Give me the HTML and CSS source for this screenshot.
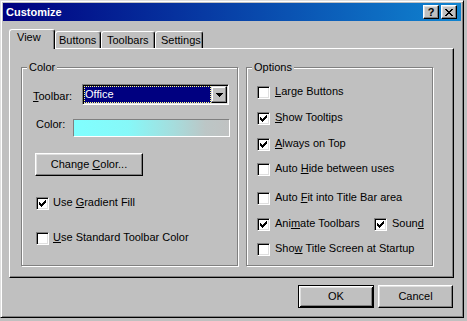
FILE: index.html
```html
<!DOCTYPE html>
<html>
<head>
<meta charset="utf-8">
<title>Customize</title>
<link rel="stylesheet" href="styles.css">
</head>
<body>
<div class="window">
  <div class="titlebar">
    <span class="title">Customize</span>
    <div class="caption-btns">
      <button class="cap-btn cap-help">?</button>
      <button class="cap-btn cap-close"><svg width="8" height="7" viewBox="0 0 8 7" shape-rendering="crispEdges"><path d="M0 0h2v1H0z M6 0h2v1H6z M1 1h2v1H1z M5 1h2v1H5z M2 2h4v1H2z M3 3h2v1H3z M2 4h4v1H2z M1 5h2v1H1z M5 5h2v1H5z M0 6h2v1H0z M6 6h2v1H6z" fill="#000"/></svg></button>
    </div>
  </div>

  <div class="dialog">
    <div class="tabs">
      <div class="tab tab-active tab-view">View</div>
      <div class="tab tab-buttons">Buttons</div>
      <div class="tab tab-toolbars">Toolbars</div>
      <div class="tab tab-settings">Settings</div>
    </div>

    <div class="panel">
      <fieldset class="group group-color">
        <legend>Color</legend>
        <div class="row row-toolbar">
          <span class="lbl lbl-toolbar"><u>T</u>oolbar:</span>
          <div class="combo">
            <div class="combo-value"><span>Office</span></div>
            <div class="combo-btn"><svg width="7" height="4" viewBox="0 0 7 4" shape-rendering="crispEdges"><path d="M0 0h7v1H0z M1 1h5v1H1z M2 2h3v1H2z M3 3h1v1H3z" fill="#000"/></svg></div>
          </div>
        </div>
        <div class="row row-color">
          <span class="lbl lbl-color">Color:</span>
          <div class="swatch"></div>
        </div>
        <button class="btn btn-change">Change <u>C</u>olor...</button>
        <label class="check check-gradient"><span class="box"><svg width="11" height="11" viewBox="0 0 11 11" shape-rendering="crispEdges"><path d="M2 4h1v3H2z M3 5h1v3H3z M4 6h1v3H4z M5 5h1v3H5z M6 4h1v3H6z M7 3h1v3H7z M8 2h1v3H8z" fill="#000"/></svg></span><span class="check-text">Use <u>G</u>radient Fill</span></label>
        <label class="check check-standard"><span class="box"></span><span class="check-text"><u>U</u>se Standard Toolbar Color</span></label>
      </fieldset>

      <fieldset class="group group-options">
        <legend>Options</legend>
        <label class="check opt opt-1"><span class="box"></span><span class="check-text"><u>L</u>arge Buttons</span></label>
        <label class="check opt opt-2"><span class="box"><svg width="11" height="11" viewBox="0 0 11 11" shape-rendering="crispEdges"><path d="M2 4h1v3H2z M3 5h1v3H3z M4 6h1v3H4z M5 5h1v3H5z M6 4h1v3H6z M7 3h1v3H7z M8 2h1v3H8z" fill="#000"/></svg></span><span class="check-text"><u>S</u>how Tooltips</span></label>
        <label class="check opt opt-3"><span class="box"><svg width="11" height="11" viewBox="0 0 11 11" shape-rendering="crispEdges"><path d="M2 4h1v3H2z M3 5h1v3H3z M4 6h1v3H4z M5 5h1v3H5z M6 4h1v3H6z M7 3h1v3H7z M8 2h1v3H8z" fill="#000"/></svg></span><span class="check-text"><u>A</u>lways on Top</span></label>
        <label class="check opt opt-4"><span class="box"></span><span class="check-text">Auto <u>H</u>ide between uses</span></label>
        <label class="check opt opt-5"><span class="box"></span><span class="check-text">Auto <u>F</u>it into Title Bar area</span></label>
        <div class="opt-pair opt-6">
          <label class="check check-animate"><span class="box"><svg width="11" height="11" viewBox="0 0 11 11" shape-rendering="crispEdges"><path d="M2 4h1v3H2z M3 5h1v3H3z M4 6h1v3H4z M5 5h1v3H5z M6 4h1v3H6z M7 3h1v3H7z M8 2h1v3H8z" fill="#000"/></svg></span><span class="check-text">Ani<u>m</u>ate Toolbars</span></label>
          <label class="check"><span class="box"><svg width="11" height="11" viewBox="0 0 11 11" shape-rendering="crispEdges"><path d="M2 4h1v3H2z M3 5h1v3H3z M4 6h1v3H4z M5 5h1v3H5z M6 4h1v3H6z M7 3h1v3H7z M8 2h1v3H8z" fill="#000"/></svg></span><span class="check-text">Soun<u>d</u></span></label>
        </div>
        <label class="check opt opt-7"><span class="box"></span><span class="check-text">Sho<u>w</u> Title Screen at Startup</span></label>
      </fieldset>
    </div>

    <div class="actions">
      <button class="btn btn-default btn-ok">OK</button>
      <button class="btn btn-cancel">Cancel</button>
    </div>
  </div>
</div>
</body>
</html>
```

FILE: styles.css
```css
* { box-sizing: border-box; }
html, body { margin: 0; padding: 0; }
body {
  width: 467px;
  height: 321px;
  overflow: hidden;
  background: #c0c0c0;
  font-family: "Liberation Sans", Arial, sans-serif;
  font-size: 11px;
  line-height: 13px;
  color: #000;
}
u { text-decoration: underline; text-underline-offset: 1px; }

.window {
  width: 464px;
  height: 318px;
  background: #c0c0c0;
  border: 1px solid;
  border-color: #dfdfdf #000 #000 #dfdfdf;
  box-shadow: inset 1px 1px #fff, inset -1px -1px #808080;
  padding: 2px;
  display: flex;
  flex-direction: column;
}

/* Title bar */
.titlebar {
  height: 18px;
  flex: none;
  background: linear-gradient(to right, #000080, #1084d0);
  display: flex;
  align-items: center;
  justify-content: space-between;
  padding: 0 4px 0 3px;
}
.title { color: #fff; font-weight: bold; font-size: 11px; line-height: 13px; }
.caption-btns { display: flex; gap: 2px; }
.cap-btn {
  width: 16px;
  height: 14px;
  padding: 0;
  margin: 0;
  background: #c0c0c0;
  border: 1px solid;
  border-color: #fff #000 #000 #fff;
  box-shadow: inset -1px -1px #808080, inset 1px 1px #dfdfdf;
  display: flex;
  align-items: center;
  justify-content: center;
  font-family: "Liberation Sans", Arial, sans-serif;
  font-weight: bold;
  font-size: 11px;
  line-height: 11px;
  color: #000;
}
.cap-close svg { display: block; margin-top: 0; }

/* Dialog body */
.dialog {
  padding: 8px 0 0 6px;
  display: flex;
  flex-direction: column;
}

.tabs {
  display: flex;
  align-items: flex-end;
  height: 20px;
  margin-bottom: -1px;
  position: relative;
  z-index: 1;
}
.tab {
  height: 17px;
  margin-bottom: 1px;
  background: #c0c0c0;
  border-top: 1px solid #fff;
  border-left: 1px solid #fff;
  border-right: 1px solid #000;
  box-shadow: inset -1px 0 #808080;
  border-radius: 3px 3px 0 0;
  padding: 2px 0 0 5px;
  white-space: nowrap;
}
.tab-active {
  height: 20px;
  margin-bottom: 0;
  padding: 1px 0 0 7px;
}
.tab-view { width: 46px; }
.tab-buttons { width: 46px; padding-left: 3px; }
.tab-toolbars { width: 54px; }
.tab-settings { width: 48px; }

.panel {
  width: 445px;
  height: 230px;
  border-top: 1px solid #fff;
  border-left: 1px solid #fff;
  border-right: 1px solid #000;
  border-bottom: 1px solid #000;
  box-shadow: inset -1px -1px #808080;
  padding: 12px 0 0 11px;
  display: flex;
  align-items: flex-start;
}

/* Group boxes */
.group {
  margin: 0;
  padding: 0;
  min-width: 0;
  height: 205px;
  border: 1px solid #808080;
  box-shadow: inset 1px 1px #fff, 1px 1px #fff;
  display: flex;
  flex-direction: column;
  align-items: flex-start;
}
.group legend {
  padding: 0 2px;
  margin-left: 5px;
  background: #c0c0c0;
  line-height: 13px;
}
.group-color { width: 217px; }
.group-options { width: 187px; margin-left: 8px; }

.row { display: flex; align-items: flex-start; }
.row-toolbar { margin-top: 10px; }
.lbl-toolbar { margin-left: 11px; width: 49px; padding-top: 6px; }
.row-color { margin-top: 14px; }
.lbl-color { margin-left: 14px; width: 37px; line-height: 11px; }

/* Combo box */
.combo {
  width: 147px;
  height: 21px;
  border: 1px solid;
  border-color: #808080 #fff #fff #808080;
  box-shadow: inset 1px 1px #000, inset -1px -1px #dfdfdf;
  background: #fff;
  padding: 1px;
  display: flex;
}
.combo-value {
  flex: 1;
  background: #000080;
  color: #fff;
  border: 1px dotted #ffff80;
  line-height: 15px;
  padding-left: 0;
}
.combo-btn {
  width: 16px;
  height: 17px;
  flex: none;
  background: #c0c0c0;
  border: 1px solid;
  border-color: #dfdfdf #000 #000 #dfdfdf;
  box-shadow: inset -1px -1px #808080, inset 1px 1px #fff;
  display: flex;
  align-items: center;
  justify-content: center;
}
.combo-btn svg { display: block; }

/* Color swatch */
.swatch {
  width: 157px;
  height: 18px;
  border: 1px solid;
  border-color: #808080 #fff #fff #808080;
  background: linear-gradient(to right, #80ffff 0%, #86f8f8 35%, #a6dcdc 65%, #bcc6c6 85%, #c0c2c2 100%);
}

/* Buttons */
.btn {
  margin: 0;
  padding: 0;
  height: 23px;
  background: #c0c0c0;
  border: 1px solid;
  border-color: #fff #000 #000 #fff;
  box-shadow: inset -1px -1px #808080, inset 1px 1px #dfdfdf;
  font-family: "Liberation Sans", Arial, sans-serif;
  font-size: 11px;
  line-height: 13px;
  color: #000;
  text-align: center;
}
.btn-change { width: 108px; margin: 16px 0 0 13px; }
.btn-default {
  border: 1px solid #000;
  box-shadow: inset 1px 1px #fff, inset -1px -1px #000, inset 2px 2px #dfdfdf, inset -2px -2px #808080;
}

.actions {
  width: 445px;
  display: flex;
  justify-content: flex-end;
  margin-top: 7px;
  padding-right: 1px;
}
.btn-ok { width: 76px; margin-right: 4px; }
.btn-cancel { width: 75px; }

/* Checkboxes */
.check { display: flex; align-items: flex-start; white-space: nowrap; }
.box {
  width: 13px;
  height: 13px;
  flex: none;
  background: #fff;
  border: 1px solid;
  border-color: #808080 #fff #fff #808080;
  box-shadow: inset 1px 1px #000, inset -1px -1px #dfdfdf;
}
.box svg { display: block; }
.check-text { line-height: 11px; margin-left: 4px; }
.check-gradient { margin: 21px 0 0 14px; }
.check-standard { margin: 22px 0 0 14px; }

.opt, .opt-pair { margin-left: 10px; }
.opt .check-text, .opt-pair .check-text { margin-left: 5px; }
.opt-pair { display: flex; }
.check-animate { width: 117px; }
.opt-1 { margin-top: 12px; }
.opt-2 { margin-top: 13px; }
.opt-3 { margin-top: 13px; }
.opt-4 { margin-top: 12px; }
.opt-5 { margin-top: 16px; }
.opt-6 { margin-top: 13px; }
.opt-7 { margin-top: 12px; }
```
